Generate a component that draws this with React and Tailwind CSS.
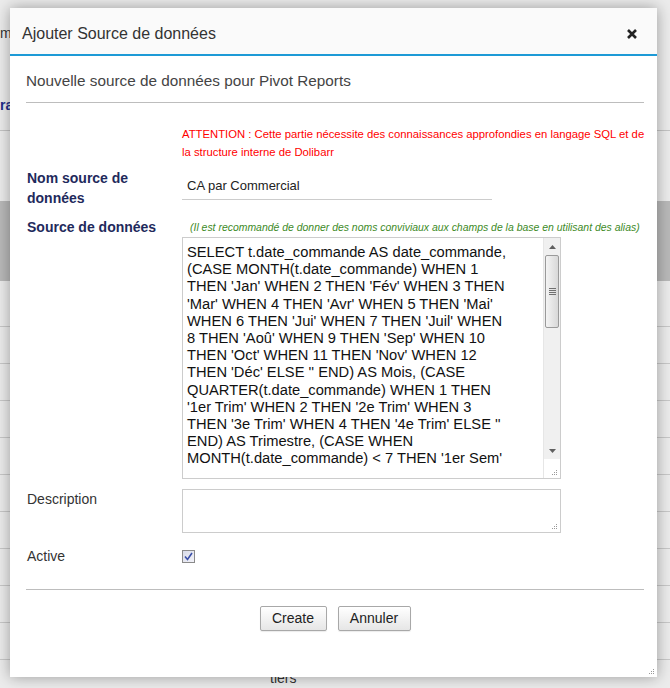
import React from 'react';

const sqlLines = [
  'SELECT t.date_commande AS date_commande,',
  '(CASE MONTH(t.date_commande) WHEN 1',
  "THEN 'Jan' WHEN 2 THEN 'Fév' WHEN 3 THEN",
  "'Mar' WHEN 4 THEN 'Avr' WHEN 5 THEN 'Mai'",
  "WHEN 6 THEN 'Jui' WHEN 7 THEN 'Juil' WHEN",
  "8 THEN 'Aoû' WHEN 9 THEN 'Sep' WHEN 10",
  "THEN 'Oct' WHEN 11 THEN 'Nov' WHEN 12",
  "THEN 'Déc' ELSE '' END) AS Mois, (CASE",
  'QUARTER(t.date_commande) WHEN 1 THEN',
  "'1er Trim' WHEN 2 THEN '2e Trim' WHEN 3",
  "THEN '3e Trim' WHEN 4 THEN '4e Trim' ELSE ''",
  'END) AS Trimestre, (CASE WHEN',
  "MONTH(t.date_commande) < 7 THEN '1er Sem'",
];

function Grip({ className }) {
  return (
    <svg width="7" height="7" viewBox="0 0 7 7" className={className}>
      <rect x="5" y="1" width="1" height="1" fill="#999" />
      <rect x="3" y="3" width="1" height="1" fill="#999" />
      <rect x="5" y="3" width="1" height="1" fill="#999" />
      <rect x="1" y="5" width="1" height="1" fill="#999" />
      <rect x="3" y="5" width="1" height="1" fill="#999" />
      <rect x="5" y="5" width="1" height="1" fill="#999" />
    </svg>
  );
}

function Scrollbar() {
  return (
    <div className="flex flex-col w-[17px] h-full bg-[#f0f0f0] border-l border-[#e6e6e6]">
      <div className="h-[17px] flex items-center justify-center">
        <svg width="7" height="4" viewBox="0 0 7 4"><path d="M0 4 L3.5 0 L7 4 Z" fill="#606060" /></svg>
      </div>
      <div className="mx-[1px] h-[73px] rounded-[2px] border border-[#9a9a9a] bg-gradient-to-r from-[#f4f4f4] to-[#d8d8d8] flex flex-col items-center justify-center gap-[1px]">
        <div className="w-[7px] h-[1px] bg-[#707070]" />
        <div className="w-[7px] h-[1px] bg-[#707070]" />
        <div className="w-[7px] h-[1px] bg-[#707070]" />
        <div className="w-[7px] h-[1px] bg-[#707070]" />
      </div>
      <div className="flex-1" />
      <div className="h-[17px] flex items-center justify-center">
        <svg width="7" height="4" viewBox="0 0 7 4"><path d="M0 0 L3.5 4 L7 0 Z" fill="#606060" /></svg>
      </div>
      <div className="h-[19px] bg-white flex items-end justify-end pr-[2px] pb-[2px]">
        <Grip />
      </div>
    </div>
  );
}

function Checkbox() {
  return (
    <div className="w-[13px] h-[13px] border border-[#8a8a8a] bg-gradient-to-br from-[#d8dbe8] to-[#f2f2f8] flex items-center justify-center">
      <svg width="9" height="9" viewBox="0 0 9 9">
        <path d="M1 4.5 L3.5 7.5 L8 1" stroke="#3a4fa8" strokeWidth="1.6" fill="none" />
      </svg>
    </div>
  );
}

function Button({ children, w }) {
  return (
    <button className={`${w} h-[25px] rounded-[2px] border border-[#a8a8a8] bg-gradient-to-b from-white to-[#e6e6e6] text-[14px] text-[#222] shadow-[0_1px_1px_rgba(0,0,0,0.08)]`}>
      {children}
    </button>
  );
}

export default function App() {
  return (
    <div className="relative w-[670px] h-[688px] overflow-hidden bg-[#ececec] font-['Liberation_Sans',Arial,sans-serif]">
      {/* page behind the dialog */}
      <div className="flex flex-col">
        <div className="h-[24px]" />
        <div className="h-[18px] leading-[18px] text-[14px] text-[#333]">m</div>
        <div className="h-[54px]" />
        <div className="h-[18px] leading-[18px] text-[14px] font-bold text-[#1f2f8a]">ra</div>
        <div className="h-[16px]" />
        <div className="h-[1px] bg-[#c4c4c4]" />
        <div className="h-[70px]" />
        <div className="h-[80px] bg-[#b9b9b9]" />
        <div className="h-[45px]" />
        {[0, 1, 2, 3, 4, 5, 6, 7, 8, 9].map((i) => (
          <div key={i} className="h-[37px] border-t border-[#c8c8c8]" />
        ))}
        <div className="pl-[270px] mt-[-27px] text-[14px] leading-[18px] text-[#333]">tiers</div>
      </div>

      {/* dialog */}
      <div className="absolute left-[10px] top-[8px] w-[647px] h-[669px] bg-white shadow-[0_0_14px_rgba(0,0,0,0.35)] flex flex-col">
        <div className="h-[48px] bg-[#fafafa] border-b-[2px] border-[#1d9ad6] flex items-center justify-between pl-[12px] pr-[20px] pt-[5px]">
          <span className="text-[16px] text-[#333]">Ajouter Source de données</span>
          <svg width="10" height="10" viewBox="0 0 10 10">
            <path d="M1 1 L9 9 M9 1 L1 9" stroke="#222" strokeWidth="2.6" />
          </svg>
        </div>

        <div className="pl-[16px] pr-[13px] flex flex-col">
          <div className="pt-[16px] text-[15.3px] leading-[18px] text-[#444]">
            Nouvelle source de données pour Pivot Reports
          </div>
          <div className="mt-[12px] h-[1px] bg-[#bdbdbd]" />

          <div className="mt-[22px] pl-[156px] text-[11.3px] leading-[18px] text-[#ff0000] whitespace-nowrap">
            <div>ATTENTION : Cette partie nécessite des connaissances approfondies en langage SQL et de</div>
            <div>la structure interne de Dolibarr</div>
          </div>

          <div className="mt-[7px] flex">
            <div className="w-[156px] pl-[1px] pr-[10px] text-[14px] leading-[20px] font-bold text-[#1f2a5c]">
              Nom source de données
            </div>
            <div className="pt-[4px]">
              <div className="w-[310px] h-[28px] border-b border-[#cccccc] pl-[5px] text-[13px] leading-[28px] text-[#222]">
                CA par Commercial
              </div>
            </div>
          </div>

          <div className="mt-[9px] flex">
            <div className="w-[156px] pl-[1px] text-[14px] leading-[20px] font-bold text-[#1f2a5c]">Source de données</div>
            <div className="flex flex-col">
              <div className="h-[20px] leading-[22px] pl-[8px] text-[10.45px] italic text-[#3d8a1f] whitespace-nowrap">
                (Il est recommandé de donner des noms conviviaux aux champs de la base en utilisant des alias)
              </div>
              <div className="w-[379px] h-[242px] border border-[#cccccc] flex">
                <div className="flex-1 overflow-hidden pl-[4px] pt-[6px] text-[14.7px] leading-[17.2px] text-[#111]">
                  {sqlLines.map((l, i) => (
                    <div key={i} className="whitespace-pre">{l}</div>
                  ))}
                </div>
                <Scrollbar />
              </div>
            </div>
          </div>

          <div className="mt-[10px] flex">
            <div className="w-[156px] pl-[1px] text-[14px] leading-[20px] text-[#333]">Description</div>
            <div className="w-[379px] h-[44px] border border-[#cccccc] flex items-end justify-end pr-[2px] pb-[2px]">
              <Grip />
            </div>
          </div>

          <div className="mt-[13px] flex items-center">
            <div className="w-[156px] pl-[1px] text-[14px] leading-[20px] text-[#333]">Active</div>
            <Checkbox />
          </div>

          <div className="mt-[23px] h-[1px] bg-[#bdbdbd]" />

          <div className="mt-[16px] flex justify-center gap-[11px]">
            <Button w="w-[67px]">Create</Button>
            <Button w="w-[73px]">Annuler</Button>
          </div>
        </div>

        <div className="flex-1" />
        <div className="flex justify-end pr-[2px] pb-[2px]">
          <Grip />
        </div>
      </div>
    </div>
  );
}
